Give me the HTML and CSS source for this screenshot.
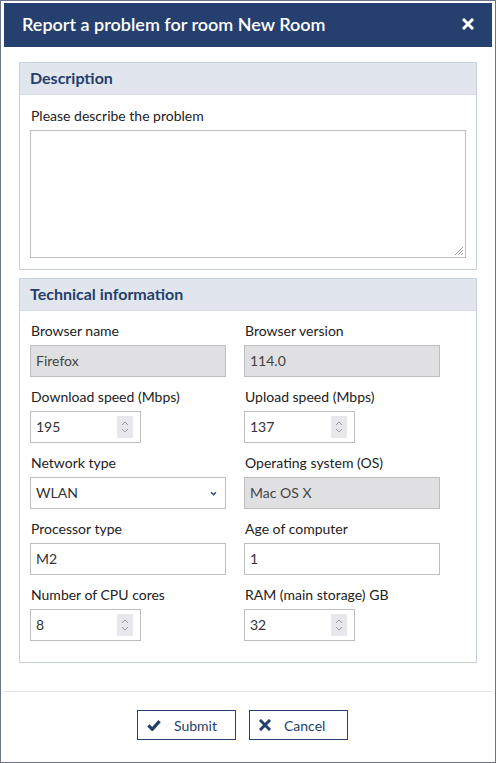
FILE: index.html
```html
<!DOCTYPE html>
<html>
<head>
<meta charset="utf-8">
<link rel="stylesheet" href="styles.css">
</head>
<body>
<div class="dialog">
  <div class="titlebar">
    <span class="title">Report a problem for room New Room</span>
    <svg class="close" viewBox="0 0 12 12" width="12" height="12"><path d="M2 2 L10 10 M10 2 L2 10" stroke="#fff" stroke-width="3" stroke-linecap="square"/></svg>
  </div>
  <div class="body">
    <section class="panel">
      <div class="panel-head">Description</div>
      <div class="panel-body desc">
        <label class="lbl">Please describe the problem</label>
        <div class="textarea">
          <svg class="grip" viewBox="0 0 12 12" width="12" height="12"><path d="M11 3 L3 11 M11 6 L6 11 M11 9 L9 11" stroke="#999" stroke-width="1"/></svg>
        </div>
      </div>
    </section>
    <section class="panel">
      <div class="panel-head">Technical information</div>
      <div class="panel-body grid">
        <div class="field"><label class="lbl">Browser name</label><div class="input ro">Firefox</div></div>
        <div class="field"><label class="lbl">Browser version</label><div class="input ro">114.0</div></div>
        <div class="field"><label class="lbl">Download speed (Mbps)</label><div class="input num">195<span class="spin"><svg viewBox="0 0 10 18" width="10" height="18"><path d="M2 7 L5 4 L8 7 M2 11 L5 14 L8 11" fill="none" stroke="#9a9aa3" stroke-width="1"/></svg></span></div></div>
        <div class="field"><label class="lbl">Upload speed (Mbps)</label><div class="input num">137<span class="spin"><svg viewBox="0 0 10 18" width="10" height="18"><path d="M2 7 L5 4 L8 7 M2 11 L5 14 L8 11" fill="none" stroke="#9a9aa3" stroke-width="1"/></svg></span></div></div>
        <div class="field"><label class="lbl">Network type</label><div class="input sel">WLAN<svg class="caret" viewBox="0 0 8 6" width="7" height="5"><path d="M1 1.5 L4 4.5 L7 1.5" fill="none" stroke="#253f6d" stroke-width="1.6"/></svg></div></div>
        <div class="field"><label class="lbl">Operating system (OS)</label><div class="input ro">Mac OS X</div></div>
        <div class="field"><label class="lbl">Processor type</label><div class="input">M2</div></div>
        <div class="field"><label class="lbl">Age of computer</label><div class="input">1</div></div>
        <div class="field"><label class="lbl">Number of CPU cores</label><div class="input num">8<span class="spin"><svg viewBox="0 0 10 18" width="10" height="18"><path d="M2 7 L5 4 L8 7 M2 11 L5 14 L8 11" fill="none" stroke="#9a9aa3" stroke-width="1"/></svg></span></div></div>
        <div class="field"><label class="lbl">RAM (main storage) GB</label><div class="input num">32<span class="spin"><svg viewBox="0 0 10 18" width="10" height="18"><path d="M2 7 L5 4 L8 7 M2 11 L5 14 L8 11" fill="none" stroke="#9a9aa3" stroke-width="1"/></svg></span></div></div>
      </div>
    </section>
  </div>
  <div class="footer">
    <button class="btn"><svg viewBox="0 0 16 14" width="14" height="12"><path d="M1.5 7.5 L6 12 L14.5 2.5" fill="none" stroke="#253f6d" stroke-width="3.8"/></svg><span>Submit</span></button>
    <button class="btn"><svg viewBox="0 0 12 12" width="12" height="12"><path d="M2 2 L10 10 M10 2 L2 10" stroke="#253f6d" stroke-width="3" stroke-linecap="square"/></svg><span>Cancel</span></button>
  </div>
</div>
</body>
</html>
```
FILE: styles.css
```css
html, body { margin: 0; padding: 0; background: #fff; }
body { font-family: Lato, "Liberation Sans", sans-serif; color: #222; }
.dialog {
  box-sizing: border-box;
  width: 496px;
  height: 763px;
  border: 1px solid #6c7585;
  padding: 2px 3px 3px 3px;
  display: flex;
  flex-direction: column;
}
.titlebar {
  height: 44px;
  background: #253f6e;
  display: flex;
  align-items: center;
  justify-content: space-between;
  padding: 0 18px 2px 18px;
  box-sizing: border-box;
}
.title { color: #fff; font-size: 18px; font-weight: 600; }
.close { display: block; }
.body { padding: 15px 15px 0 15px; }
.panel { border: 1px solid #c8d0dc; margin-bottom: 8px; }
.panel-head {
  height: 31px;
  line-height: 30px;
  background: #e1e6ee;
  border-bottom: 1px solid #d6dce6;
  padding: 0 10px;
  color: #253f6d;
  font-weight: 700;
  font-size: 16px;
}
.panel-body { padding: 10px 10px 11px 10px; }
.panel-body.desc { padding-top: 11px; }
.lbl { display: block; font-size: 14px; line-height: 20px; margin-bottom: 4px; padding-left: 1px; color: #222; }
.textarea {
  position: relative;
  height: 126px;
  border: 1px solid #bdbdbd;
  background: #fff;
}
.grip { position: absolute; right: 1px; bottom: 1px; }
.grid { display: grid; grid-template-columns: 196px 196px; column-gap: 18px; row-gap: 10px; padding-bottom: 21px; }
.input {
  box-sizing: border-box;
  height: 32px;
  border: 1px solid #bdbdbd;
  font-size: 14px;
  line-height: 30px;
  padding: 0 5px;
  color: #333;
  background: #fff;
  position: relative;
}
.input.ro { background: #e0e0e2; color: #444; }
.input.num { width: 111px; }
.spin {
  position: absolute;
  right: 7px;
  top: 4px;
  width: 16px;
  height: 22px;
  background: #e8e8ec;
  display: flex;
  align-items: center;
  justify-content: center;
}
.spin svg { display: block; }
.sel { display: flex; align-items: center; justify-content: space-between; padding-right: 8px; }
.caret { display: block; }
.footer {
  margin-top: auto;
  border-top: 1px solid #e3e3e3;
  height: 68px;
  display: flex;
  justify-content: center;
  gap: 13px;
  padding: 18px 11px 0 0;
  box-sizing: border-box;
}
.btn {
  box-sizing: border-box;
  width: 99px;
  height: 30px;
  background: #fff;
  border: 1px solid #253f6d;
  color: #253f6d;
  font-family: Lato, "Liberation Sans", sans-serif;
  font-size: 14px;
  display: flex;
  align-items: center;
  padding: 0 0 0 9px;
  gap: 13px;
  cursor: pointer;
}
.btn svg { display: block; }
```
